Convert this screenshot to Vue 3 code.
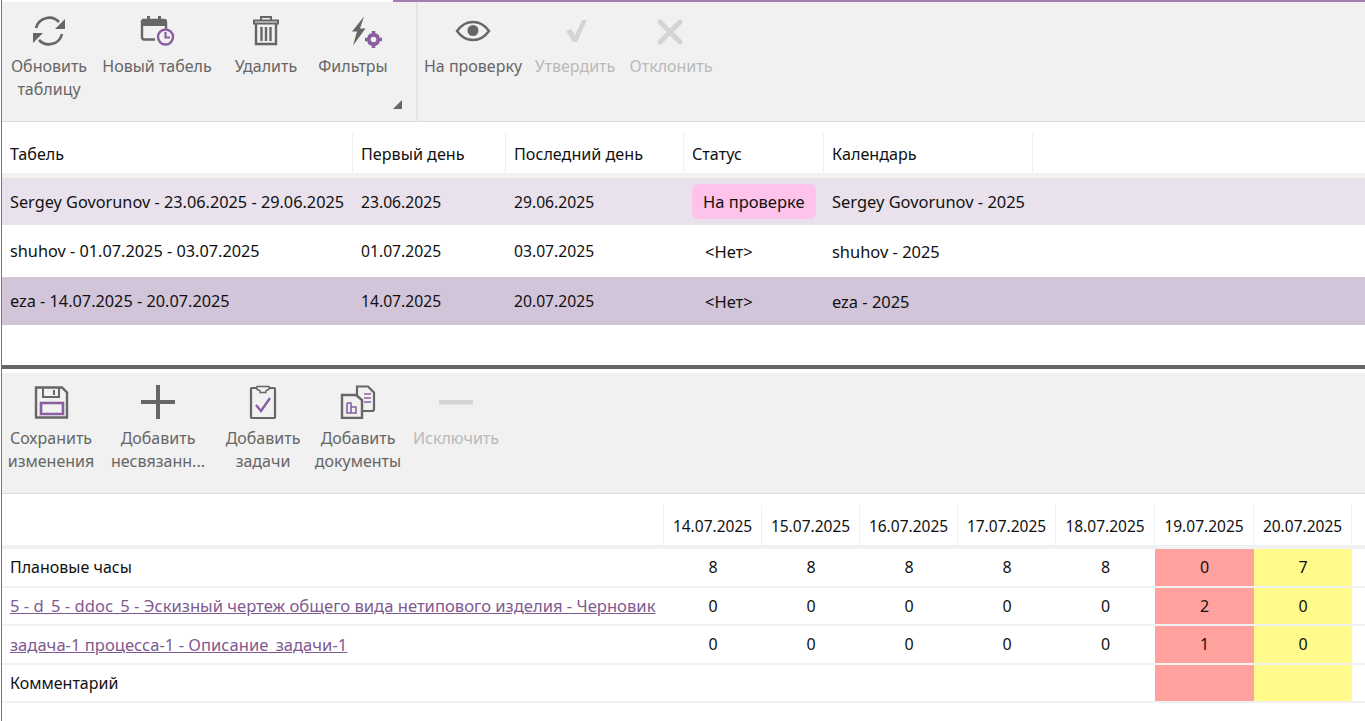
<script setup>
const topLeft = [
  { key: 'refresh', lines: ['Обновить', 'таблицу'] },
  { key: 'calendar', lines: ['Новый табель'] },
  { key: 'trash', lines: ['Удалить'] },
  { key: 'filter', lines: ['Фильтры'] }
];
const topRight = [
  { key: 'eye', lines: ['На проверку'] },
  { key: 'check', lines: ['Утвердить'], off: true },
  { key: 'cross', lines: ['Отклонить'], off: true }
];
const bottomTools = [
  { key: 'save', lines: ['Сохранить', 'изменения'] },
  { key: 'plus', lines: ['Добавить', 'несвязанн...'] },
  { key: 'task', lines: ['Добавить', 'задачи'] },
  { key: 'docs', lines: ['Добавить', 'документы'] },
  { key: 'minus', lines: ['Исключить'], off: true }
];

const sheets = [
  { name: 'Sergey Govorunov - 23.06.2025 - 29.06.2025', first: '23.06.2025', last: '29.06.2025', status: 'На проверке', cal: 'Sergey Govorunov - 2025', cls: 'row-light' },
  { name: 'shuhov - 01.07.2025 - 03.07.2025', first: '01.07.2025', last: '03.07.2025', status: '<Нет>', cal: 'shuhov - 2025', cls: '' },
  { name: 'eza - 14.07.2025 - 20.07.2025', first: '14.07.2025', last: '20.07.2025', status: '<Нет>', cal: 'eza - 2025', cls: 'row-selected' }
];

const days = ['14.07.2025', '15.07.2025', '16.07.2025', '17.07.2025', '18.07.2025', '19.07.2025', '20.07.2025'];
const hours = [
  { label: 'Плановые часы', values: [8, 8, 8, 8, 8, 0, 7] },
  { label: '5 - d_5 - ddoc_5 - Эскизный чертеж общего вида нетипового изделия - Черновик', link: true, values: [0, 0, 0, 0, 0, 2, 0] },
  { label: 'задача-1 процесса-1 - Описание_задачи-1', link: true, values: [0, 0, 0, 0, 0, 1, 0] },
  { label: 'Комментарий', values: ['', '', '', '', '', '', ''] }
];

function dayClass(i) {
  if (i === 5) return 'day-red';
  if (i === 6) return 'day-yellow';
  return '';
}
</script>

<template>
  <div class="page">
    <div class="top-line"></div>

    <div class="toolbar">
      <div class="group group-a">
        <button v-for="t in topLeft" :key="t.key" class="tool">
          <span class="icon">
            <svg v-if="t.key === 'refresh'" width="36" height="34" viewBox="0 0 36 34" fill="none" stroke="#666" stroke-width="2.6">
              <path d="M5 14A13.500 13.500 0 0 1 28 8" />
              <path d="M31 20A13.500 13.500 0 0 1 8 26" />
              <path d="M34 5v10h-10z" fill="#666" stroke="none" />
              <path d="M2 29V19h10z" fill="#666" stroke="none" />
            </svg>
            <svg v-else-if="t.key === 'calendar'" width="36" height="34" viewBox="0 0 36 34" fill="none">
              <path d="M3 6h22a2 2 0 0 1 2 2v7M16 25.500H5a2 2 0 0 1-2-2V6" stroke="#666" stroke-width="2.4" />
              <path d="M3 7h24v5H3zM8 2h3v6H8zM19 2h3v6h-3z" fill="#666" />
              <circle cx="26.500" cy="23" r="7.500" fill="#f1f1f1" stroke="#8a5fa0" stroke-width="2.4" />
              <path d="M26.500 18v5.500H31" stroke="#8a5fa0" stroke-width="2.200" />
            </svg>
            <svg v-else-if="t.key === 'trash'" width="36" height="34" viewBox="0 0 36 34" fill="none" stroke="#666">
              <path d="M6 6.500h24V9.500H6z" stroke-width="2" />
              <path d="M13 6V3h10v3" stroke-width="2" />
              <path d="M8 10v20h20V10" stroke-width="2.400" />
              <path d="M13.500 13v14M18 13v14M22.500 13v14" stroke-width="2.400" />
            </svg>
            <svg v-else-if="t.key === 'filter'" width="60" height="34" viewBox="0 0 60 34">
              <path d="M41 2.500 29 17.500h5L30 31.500 42.500 14.500H37z" fill="#666" />
              <g fill="#8a5fa0" transform="translate(50.500 25.500)">
                <circle r="6.500" />
                <path d="M-1.800-8.500h3.600v4h-3.600zM-1.800 4.500h3.600v4h-3.600zM-8.500-1.800h4v3.600h-4zM4.500-1.800h4v3.600h-4z" />
                <path d="M-6-3.500-3.500-6l3 3L-3-.5zM.5 3l2.500-2.500 3 3L3.500 6zM6-3.500 3.500-6l-3 3L3-.5zM-.5 3-3 .5l-3 3L-3.500 6z" />
              </g>
              <circle cx="50.500" cy="25.500" r="2.800" fill="#f1f1f1" />
            </svg>
          </span>
          <span v-for="line in t.lines" :key="line" class="label">{{ line }}</span>
        </button>
        <span class="corner"></span>
      </div>
      <div class="group group-b">
        <button v-for="t in topRight" :key="t.key" class="tool" :class="{ off: t.off }">
          <span class="icon">
            <svg v-if="t.key === 'eye'" width="36" height="34" viewBox="0 0 36 34" fill="none">
              <path d="M2 17C7 10 12 8 18 8s11 2 16 9c-5 7-10 9-16 9S7 24 2 17z" stroke="#666" stroke-width="2.400" />
              <circle cx="18" cy="16.500" r="5.500" fill="#666" />
            </svg>
            <svg v-else-if="t.key === 'check'" width="36" height="34" viewBox="0 0 36 34">
              <path d="M9 17l5-2 4 6 7-15h5L20 28h-4z" fill="#d4d4d4" />
            </svg>
            <svg v-else-if="t.key === 'cross'" width="36" height="34" viewBox="0 0 36 34" stroke="#d4d4d4" stroke-width="5" stroke-linecap="round">
              <path d="M7 8l20 20M27 8 7 28" />
            </svg>
          </span>
          <span v-for="line in t.lines" :key="line" class="label">{{ line }}</span>
        </button>
      </div>
    </div>

    <div class="sheet-table">
      <div class="sheet-row sheet-head">
        <div class="head-cell">Табель</div>
        <div class="head-cell">Первый день</div>
        <div class="head-cell">Последний день</div>
        <div class="head-cell">Статус</div>
        <div class="head-cell">Календарь</div>
      </div>
      <div v-for="s in sheets" :key="s.name" class="sheet-row sheet-body" :class="s.cls">
        <div class="cell name-cell">{{ s.name }}</div>
        <div class="cell date-cell">{{ s.first }}</div>
        <div class="cell date-cell">{{ s.last }}</div>
        <div class="cell"><span class="status" :class="{ review: s.status === 'На проверке' }">{{ s.status }}</span></div>
        <div class="cell cal-cell">{{ s.cal }}</div>
      </div>
    </div>

    <div class="splitter"></div>

    <div class="toolbar toolbar-low">
      <div class="group group-c">
        <button v-for="t in bottomTools" :key="t.key" class="tool" :class="{ off: t.off }">
          <span class="icon">
            <svg v-if="t.key === 'save'" width="36" height="34" viewBox="0 0 36 34" fill="none">
              <path d="M3 2.500h26l5 5v25H3z" stroke="#666" stroke-width="2.400" />
              <path d="M10 3v9h16V3M21 5v5" stroke="#666" stroke-width="2" />
              <path d="M8 18h22v11H8z" stroke="#8a5fa0" stroke-width="2.600" />
            </svg>
            <svg v-else-if="t.key === 'plus'" width="36" height="34" viewBox="0 0 36 34" fill="#666">
              <path d="M16 0h4v34h-4z" />
              <path d="M1 15h34v4H1z" />
            </svg>
            <svg v-else-if="t.key === 'task'" width="36" height="34" viewBox="0 0 36 34" fill="none">
              <path d="M12 3H7a1 1 0 0 0-1 1v28a1 1 0 0 0 1 1h22a1 1 0 0 0 1-1V4a1 1 0 0 0-1-1h-5" stroke="#666" stroke-width="2.200" />
              <path d="M12 1.500h12v3l-3 1v2h-6v-2l-3-1z" fill="#f1f1f1" stroke="#666" stroke-width="1.400" />
              <path d="M11 20l5 6 9-13" stroke="#8a5fa0" stroke-width="2.400" />
            </svg>
            <svg v-else-if="t.key === 'docs'" width="36" height="34" viewBox="0 0 36 34" fill="none">
              <path d="M17 1.500h11l6 6V24a2 2 0 0 1-2 2H17z" fill="#f1f1f1" stroke="#666" stroke-width="2.200" />
              <path d="M24 9h7M24 13h7M24 17h7" stroke="#8a5fa0" stroke-width="1.600" />
              <path d="M2 10h14l6 5v18H2z" fill="#f1f1f1" stroke="#666" stroke-width="2.400" />
              <path d="M7 18v10h9v-6h-5v6M7 18h4v4" stroke="#8a5fa0" stroke-width="1.600" />
            </svg>
            <svg v-else-if="t.key === 'minus'" width="36" height="34" viewBox="0 0 36 34" fill="#d4d4d4">
              <path d="M1 15h34v4.500H1z" />
            </svg>
          </span>
          <span v-for="line in t.lines" :key="line" class="label">{{ line }}</span>
        </button>
      </div>
    </div>

    <div class="hours-table">
      <div class="hours-row hours-head">
        <div class="hours-label hours-blank"></div>
        <div v-for="d in days" :key="d" class="head-cell day-head">{{ d }}</div>
      </div>
      <div v-for="h in hours" :key="h.label" class="hours-row hours-body">
        <div class="hours-label">
          <a v-if="h.link" class="task-link">{{ h.label }}</a>
          <template v-else>{{ h.label }}</template>
        </div>
        <div v-for="(v, i) in h.values" :key="i" class="day-cell" :class="dayClass(i)">{{ v }}</div>
      </div>
    </div>
  </div>
</template>

<style scoped>
.page {
  width: 1364px;
  height: 721px;
  margin-left: 1px;
  overflow: hidden;
  background: #fff;
  border-left: 1px solid #7f6f8a;
  box-sizing: border-box;
  font-family: "Noto Sans", "Open Sans", sans-serif;
  font-size: 16px;
  color: #111;
}

.top-line {
  height: 2px;
  margin-left: 391px;
  background: #a27eb1;
}

.toolbar {
  display: flex;
  height: 120px;
  background: #f1f1f1;
  border-bottom: 1px solid #dcdcdc;
  box-sizing: border-box;
}

.toolbar-low {
  height: 121px;
  margin-top: 4px;
}

.toolbar-low .icon {
  margin-bottom: 8px;
}

.group {
  display: grid;
  align-items: start;
  position: relative;
}

.group-a {
  grid-template-columns: 94px 122px 96px 78px;
  width: 414px;
  border-right: 2px solid #e4e4e4;
}

.group-b {
  grid-template-columns: 110px 94px 98px;
}

.group-c {
  grid-template-columns: 98px 116px 94px 96px 100px;
}

.tool {
  display: flex;
  flex-direction: column;
  align-items: center;
  padding: 12px 0 0;
  border: none;
  background: none;
  font: inherit;
  color: #666;
}

.tool.off {
  color: #b9b9b9;
}

.icon {
  display: flex;
  justify-content: center;
  height: 34px;
  margin-bottom: 7px;
}

.label {
  line-height: 23px;
  white-space: nowrap;
}

.corner {
  position: absolute;
  right: 14px;
  bottom: 12px;
  width: 0;
  height: 0;
  border-left: 9px solid transparent;
  border-bottom: 9px solid #666;
}

.sheet-table {
  margin-top: 11px;
  height: 232px;
}

.sheet-row {
  display: grid;
  grid-template-columns: 351px 153px 178px 140px 209px;
}

.sheet-head {
  height: 45px;
  border-bottom: 5px solid #f1f1f1;
  box-sizing: border-box;
}

.sheet-head .head-cell {
  padding-top: 2px;
  font-size: 16.150px;
}

.head-cell {
  display: flex;
  align-items: center;
  padding-left: 8px;
  border-right: 1px solid #f0f0f0;
  white-space: nowrap;
}

.sheet-body {
  align-items: center;
  height: 48px;
  margin-bottom: 2px;
}

.row-light {
  height: 47px;
  background: #e9e1ec;
}

.row-selected {
  background: #d3c5d9;
}

.cell {
  padding-left: 8px;
  white-space: nowrap;
}

.name-cell {
  font-size: 16.300px;
}

.cal-cell {
  font-size: 16.450px;
}

.date-cell {
  font-size: 15.700px;
}

.status {
  display: inline-block;
  height: 35px;
  line-height: 35px;
  padding: 0 11px;
  margin-left: 2px;
  font-size: 16.500px;
  border-radius: 6px;
}

.status.review {
  margin-left: 0;
  background: #fdc3ea;
}

.splitter {
  height: 4px;
  background: #666;
}

.hours-table {
  margin-top: 11px;
}

.hours-row {
  display: grid;
  grid-template-columns: 662px 98px 98px 98px 98px 99px 99px 98px;
}

.hours-head {
  height: 44px;
  border-bottom: 4px solid #f1f1f1;
  box-sizing: border-box;
}

.hours-blank {
  border-right: 1px solid #f0f0f0;
}

.day-head {
  justify-content: center;
  padding: 2px 0 0;
  font-size: 15.500px;
}

.hours-body {
  height: 38.500px;
  border-bottom: 2px solid #f1f1f1;
  box-sizing: border-box;
}

.hours-label {
  display: flex;
  align-items: center;
  padding-left: 8px;
  white-space: nowrap;
}

.task-link {
  font-size: 16.600px;
  color: #7f5a90;
  text-decoration: underline;
}

.day-cell {
  display: flex;
  align-items: center;
  justify-content: center;
}

.day-red {
  background: #ffa19d;
}

.day-yellow {
  background: #fffa8a;
}
</style>
